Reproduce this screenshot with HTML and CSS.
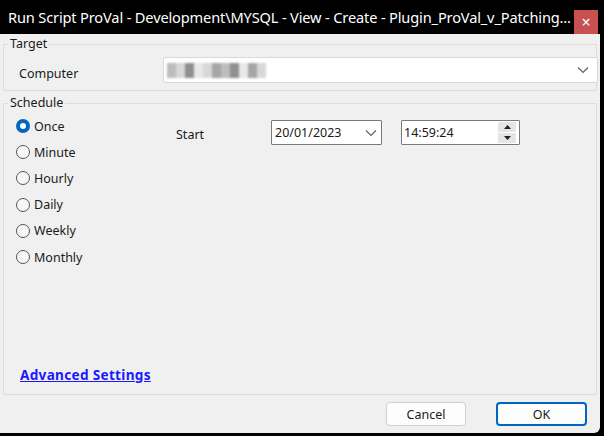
FILE: index.html
```html
<!DOCTYPE html>
<html>
<head>
<meta charset="utf-8">
<link rel="stylesheet" href="styles.css">
</head>
<body>
<div class="window">
  <div class="titlebar">
    <span class="title">Run Script ProVal - Development\MYSQL - View - Create - Plugin_ProVal_v_Patching...</span>
    <div class="close">×</div>
  </div>
  <div class="dialog">
    <fieldset class="group target">
      <legend>Target</legend>
      <div class="row">
        <span class="lbl">Computer</span>
        <div class="combo">
          <div class="mosaic">
            <i class="m1"></i><i class="m2"></i><i class="m3"></i><i class="m4"></i><i class="m2"></i><i class="m5"></i><i class="m1"></i><i class="m3"></i><i class="m4"></i><i class="m5"></i><i class="m2"></i>
          </div>
          <svg class="chev" width="12" height="8" viewBox="0 0 12 8"><path d="M1 1.5 L6 6.5 L11 1.5" fill="none" stroke="#606060" stroke-width="1.2"/></svg>
        </div>
      </div>
    </fieldset>
    <fieldset class="group schedule">
      <legend>Schedule</legend>
      <div class="sinner">
        <div class="sched">
          <div class="radios">
            <div class="radio"><span class="dot on"></span>Once</div>
            <div class="radio"><span class="dot"></span>Minute</div>
            <div class="radio"><span class="dot"></span>Hourly</div>
            <div class="radio"><span class="dot"></span>Daily</div>
            <div class="radio"><span class="dot"></span>Weekly</div>
            <div class="radio"><span class="dot"></span>Monthly</div>
          </div>
          <div class="start">
            <span class="slbl">Start</span>
            <div class="datebox">
              <span>20/01/2023</span>
              <svg width="12" height="8" viewBox="0 0 12 8"><path d="M1 1.5 L6 6.5 L11 1.5" fill="none" stroke="#606060" stroke-width="1.1"/></svg>
            </div>
            <div class="timebox">
              <span>14:59:24</span>
              <div class="spin">
                <div class="sbtn"><svg width="7" height="4" viewBox="0 0 7 4"><path d="M0 4 L3.5 0 L7 4 Z" fill="#222"/></svg></div>
                <div class="sbtn"><svg width="7" height="4" viewBox="0 0 7 4"><path d="M0 0 L3.5 4 L7 0 Z" fill="#222"/></svg></div>
              </div>
            </div>
          </div>
        </div>
        <a class="adv" href="#">Advanced Settings</a>
      </div>
    </fieldset>
    <div class="buttons">
      <button class="btn cancel">Cancel</button>
      <button class="btn ok">OK</button>
    </div>
  </div>
</div>
</body>
</html>
```
FILE: styles.css
```css
* { box-sizing: border-box; }
html, body { margin: 0; padding: 0; }
body {
  background: #000;
  width: 604px;
  height: 436px;
  overflow: hidden;
  font-family: "Noto Sans", "Open Sans", sans-serif;
  font-size: 12.5px;
  color: #1a1a1a;
}
.window { width: 600px; }
.titlebar {
  height: 34px;
  display: flex;
  align-items: center;
  padding-left: 8px;
  color: #fff;
  position: relative;
}
.title {
  font-size: 14.6px;
  letter-spacing: -0.15px;
  white-space: nowrap;
}
.close {
  position: absolute;
  left: 574px;
  top: 10px;
  width: 24px;
  height: 24px;
  z-index: 2;
  display: flex;
  align-items: center;
  justify-content: center;
  background-color: #c75050;
  color: #fff;
  font-size: 16px;
  line-height: 1;
}
.dialog {
  background: #f0f0f0;
  height: 399px;
  border-bottom-right-radius: 6px;
  display: flex;
  flex-direction: column;
  padding: 0 3px 0 3px;
}
.group {
  margin: 0;
  border: 1px solid #dcdcdc;
  padding: 0;
  min-width: 0;
}
.group legend {
  padding: 0 2px;
  margin-left: 4px;
  font-size: 12.5px;
  line-height: 16px;
  color: #1a1a1a;
}
.target {
  height: 55px;
  margin-top: 2px;
}
.row {
  display: flex;
  align-items: center;
  padding-left: 15px;
  margin-top: 5px;
}
.lbl { width: 144px; padding-top: 6px; }
.combo {
  flex: 1;
  height: 26px;
  background: #fff;
  border: 1px solid #d9d9d9;
  border-radius: 2px;
  display: flex;
  align-items: center;
  justify-content: space-between;
  padding: 0 8px 0 3px;
  margin-right: -2px;
}
.mosaic {
  display: flex;
  height: 15px;
  filter: blur(1.2px);
}
.mosaic i {
  display: block;
  width: 9px;
  height: 15px;
}
.m1 { background: #bdbdbd; }
.m2 { background: #d8d8d8; }
.m3 { background: #8f8f8f; }
.m4 { background: #e8e8e8; }
.m5 { background: #a6a6a6; }
.schedule {
  margin-top: 4px;
  height: 300px;
}
.sinner {
  height: 283px;
  display: flex;
  flex-direction: column;
}
.sched {
  display: flex;
}
.radios {
  display: flex;
  flex-direction: column;
  padding-left: 12px;
  margin-top: 2px;
  width: 172px;
}
.radio {
  display: flex;
  align-items: center;
  height: 26.2px;
  gap: 4px;
}
.dot {
  width: 14px;
  height: 14px;
  border-radius: 50%;
  border: 1px solid #555;
  background: #f7f7f7;
}
.dot.on {
  border: none;
  background: #0067c0;
  position: relative;
}
.dot.on::after {
  content: "";
  position: absolute;
  left: 4px;
  top: 4px;
  width: 6px;
  height: 6px;
  border-radius: 50%;
  background: #fff;
}
.start {
  display: flex;
  align-items: center;
  margin-top: 9px;
  height: 25px;
}
.slbl { width: 95px; padding-top: 3px; }
.datebox {
  width: 111px;
  height: 25px;
  background: #fff;
  border: 1px solid #7a7a7a;
  border-radius: 1px;
  display: flex;
  align-items: center;
  justify-content: space-between;
  padding: 0 4px 0 3px;
}
.timebox {
  margin-left: 19px;
  width: 119px;
  height: 25px;
  background: #fff;
  border: 1px solid #7a7a7a;
  border-radius: 1px;
  display: flex;
  align-items: center;
  justify-content: space-between;
  padding: 1px 3px 1px 2px;
}
.spin {
  display: flex;
  flex-direction: column;
  gap: 1px;
  height: 21px;
}
.sbtn {
  width: 18px;
  height: 10px;
  background: #e5e5e5;
  display: flex;
  align-items: center;
  justify-content: center;
}
.adv {
  margin-top: auto;
  margin-bottom: 10px;
  margin-left: 16px;
  align-self: flex-start;
  color: #1a1aff;
  font-weight: bold;
  font-size: 13.6px;
  letter-spacing: 0.3px;
  text-decoration: underline;
}
.buttons {
  display: flex;
  justify-content: flex-end;
  gap: 30px;
  padding-right: 10px;
  margin-top: 7px;
}
.btn {
  font-family: inherit;
  font-size: 12.5px;
  color: #1a1a1a;
  height: 24px;
  background: #fdfdfd;
  border-radius: 4px;
  border: 1px solid #d0d0d0;
}
.cancel { width: 80px; }
.ok { width: 91px; border: 2px solid #0067c0; }
```
